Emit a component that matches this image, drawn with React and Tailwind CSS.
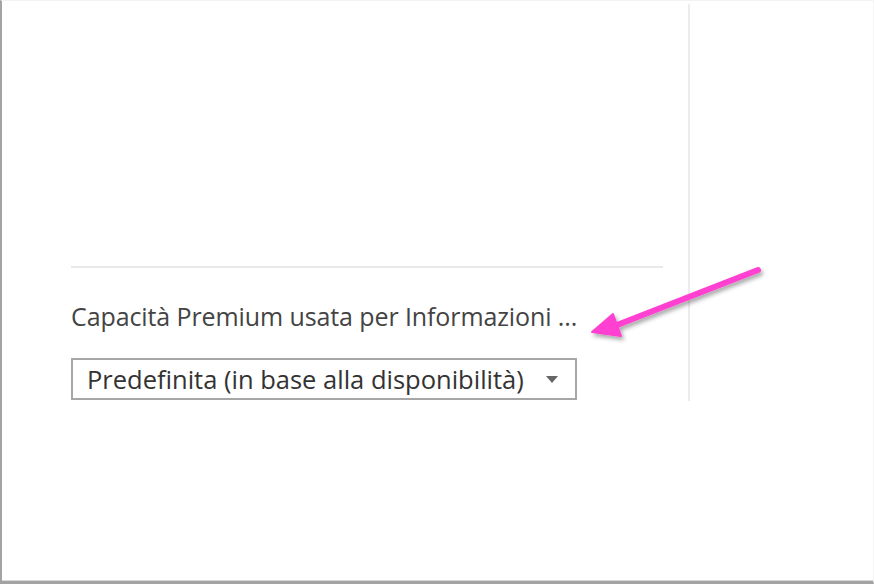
import React from 'react';

function PointerArrow() {
  return (
    <svg
      className="absolute left-[585px] top-[260px]"
      width="195"
      height="90"
      viewBox="0 0 195 90"
      fill="none"
    >
      <defs>
        <filter id="arrowShadow" x="-20%" y="-40%" width="140%" height="180%">
          <feDropShadow dx="2" dy="3" stdDeviation="2" floodColor="#000" floodOpacity="0.35" />
        </filter>
      </defs>
      <g filter="url(#arrowShadow)">
        <line x1="173" y1="10" x2="32" y2="65" stroke="#ff3fd0" strokeWidth="6" strokeLinecap="round" />
        <path d="M7 72 L28 54 L36 76 Z" fill="#ff3fd0" stroke="#ff3fd0" strokeWidth="2" strokeLinejoin="round" />
      </g>
    </svg>
  );
}

export default function App() {
  return (
    <div className="relative w-[874px] h-[584px] bg-white overflow-hidden" style={{ fontFamily: '"Open Sans", sans-serif' }}>
      <div className="h-full border-l-2 border-b-[3px] border-[#a3a3a3] border-t border-t-[#f3f3f3] border-r border-r-[#f5f5f5] shadow-[inset_0_-1px_0_#d8d8d8]">
        <div className="flex">
          <div className="w-[688px] h-[397px] mt-[3px] border-r-2 border-[#ececec] pl-[69px] pr-[25px] flex flex-col">
            <div className="h-[264px] border-b-2 border-[#e8e8e8]" />
            <div className="mt-[34px] text-[25px] leading-[28px] text-[#444] tracking-[-0.1px] whitespace-nowrap">
              Capacità Premium usata per Informazioni ...
            </div>
            <div className="mt-[28px] w-[506px] h-[42px] border-2 border-[#a6a6a6] flex items-center justify-between pl-[14px] pr-[17px]">
              <span className="text-[25.5px] leading-[30px] text-[#333] whitespace-nowrap">
                Predefinita (in base alla disponibilità)
              </span>
              <svg width="12" height="7" viewBox="0 0 12 7">
                <path d="M0 0 L12 0 L6 7 Z" fill="#666" />
              </svg>
            </div>
          </div>
        </div>
      </div>
      <PointerArrow />
    </div>
  );
}
